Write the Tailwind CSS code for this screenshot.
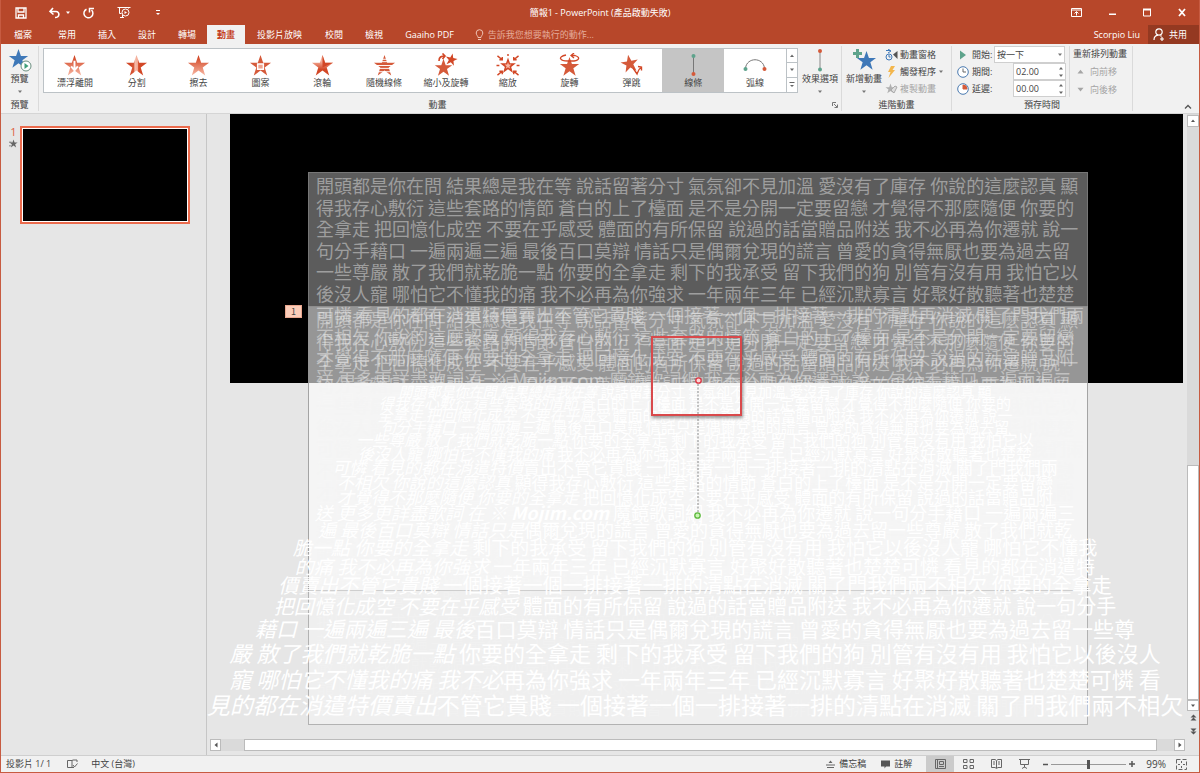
<!DOCTYPE html>
<html lang="zh-Hant">
<head>
  <meta charset="UTF-8" />
  <title>簡報1 - PowerPoint</title>
  <script src="https://cdn.jsdelivr.net/npm/@tailwindcss/browser@4"></script>
</head>
<body class="h-screen flex flex-col overflow-hidden bg-[#e6e6e6] border-x border-b border-[#c75b41] font-['Open_Sans','Noto_Sans_CJK_TC',sans-serif] text-[9px] leading-[12px] text-[#444]">

  <!-- Shared shapes -->
  <svg class="absolute w-0 h-0">
    <defs>
      <linearGradient id="fadeDown" x1="0" y1="0" x2="0" y2="1"><stop offset="0.1" stop-color="#d24726" /><stop offset="1" stop-color="#f8b8a4" /></linearGradient>
      <linearGradient id="fadeSplit"><stop offset="0.2" stop-color="#d24726" /><stop offset="0.38" stop-color="#d9593b" /><stop offset="0.42" stop-color="#f6c0b0" /><stop offset="0.56" stop-color="#f3a791" /><stop offset="0.6" stop-color="#d24726" /></linearGradient>
      <linearGradient id="fadeWheel" x1="0" y1="0" x2="0" y2="1"><stop offset="0.3" stop-color="#f5b09c" /><stop offset="0.7" stop-color="#d24726" /></linearGradient>
    </defs>
    <symbol id="star" viewBox="0 0 24 24"><path d="M12 1l2.800 8H23l-6.600 5 2.600 8.500-7-5.200-7 5.200L7.600 14 1 9h8.200z" /></symbol>
    <symbol id="down" viewBox="0 0 6 4"><path d="M1 0.500h4L3 3z" /></symbol>
    <symbol id="up" viewBox="0 0 6 4"><path d="M1 3h4L3 0.500z" /></symbol>
  </svg>

  <!-- Title bar and tabs -->
  <header class="shrink-0 bg-[#b7472a] text-white">
    <div class="relative h-[25px] flex items-center justify-between pl-[13px] pr-[12px]">
      <div class="flex items-center">
        <button aria-label="儲存檔案"><svg class="w-[14px] h-[12px]" viewBox="0 0 14 12" fill="none" stroke="#fff" stroke-width="1.300"><path d="M2 1h10v10H2zM4 1v4h6V1M4.500 11V8h5v3" /></svg></button>
        <button aria-label="復原" class="ml-[20px]"><svg class="w-[13px] h-[12px]" viewBox="0 0 13 12" fill="none" stroke="#fff" stroke-width="1.600"><path d="M5 1L2 4.500l3.500 3M2 4.500h6c4 0 4 6-1 6" /></svg></button>
        <button aria-label="復原選單" class="ml-[4px]"><svg class="w-[6px] h-[4px] fill-white"><use href="#down" /></svg></button>
        <button aria-label="重複" class="ml-[11px]"><svg class="w-[13px] h-[12px]" viewBox="0 0 13 12" fill="none" stroke="#fff" stroke-width="1.500"><path d="M4.500 2.200a4.500 4.500 0 1 0 5 0.800M7.500 5.500V1.500H12" /></svg></button>
        <button aria-label="從首張投影片" class="ml-[22px]"><svg class="w-[14px] h-[13px]" viewBox="0 0 14 13" fill="none" stroke="#fff"><path d="M0.500 1.500h13M2.500 1.500v6h2M11.500 1.500v1M3 11.500h4M5.500 9v2" /><circle cx="8.500" cy="6.500" r="3.500" /><path d="M7.500 5v3l2.500-1.500z" fill="#fff" stroke="none" /></svg></button>
        <button aria-label="自訂快速存取工具列" class="ml-[24px]"><svg class="w-[6px] h-[6px]" viewBox="0 0 6 6" fill="#fff"><path d="M1 0h4v1H1zM1 3h4L3 5z" /></svg></button>
      </div>
      <h1 class="absolute left-1/2 -translate-x-1/2 whitespace-nowrap">簡報1 - PowerPoint (產品啟動失敗)</h1>
      <div class="flex items-center gap-[25px]">
        <button aria-label="功能區顯示選項"><svg class="w-[11px] h-[9px]" viewBox="0 0 11 9" fill="none" stroke="#fff"><path d="M0.500 0.500h10v8h-10zM0.500 2h10M5.500 7.500V4M3.500 5.500l2-2 2 2" /></svg></button>
        <button aria-label="最小化"><svg class="w-[10px] h-[9px]" viewBox="0 0 10 9" fill="#fff"><path d="M2 5.500h7V7H2z" /></svg></button>
        <button aria-label="最大化"><svg class="w-[10px] h-[9px]" viewBox="0 0 10 9" fill="none" stroke="#fff"><path d="M1.500 1v7h7V1" /><path d="M1 1.500h8" stroke-width="2" /></svg></button>
        <button aria-label="關閉"><svg class="w-[10px] h-[9px]" viewBox="0 0 10 9" stroke="#fff" stroke-width="1.800"><path d="M2 1l6 7M8 1L2 8" /></svg></button>
      </div>
    </div>
    <nav class="h-[19px] flex items-stretch">
      <button class="w-[46px] pr-[2px]">檔案</button>
      <button class="px-[11px]">常用</button>
      <button class="px-[11px]">插入</button>
      <button class="px-[11px]">設計</button>
      <button class="px-[11px]">轉場</button>
      <button class="px-[10px] bg-[#f1f1f1] text-[#c43e1c] font-bold">動畫</button>
      <button class="px-[12px]">投影片放映</button>
      <button class="px-[11px]">校閱</button>
      <button class="px-[11px]">檢視</button>
      <button class="px-[11px]">Gaaiho PDF</button>
      <label class="flex items-center gap-[4px] pl-[10px]">
        <svg class="w-[9px] h-[12px]" viewBox="0 0 9 12" fill="none" stroke="#f0c4b6"><path d="M3 8.500C3 7 1.200 6 1.200 4a3.300 3.300 0 0 1 6.600 0C7.800 6 6 7 6 8.500zM3 10.500h3" /></svg>
        <input type="text" aria-label="操作說明搜尋" placeholder="告訴我您想要執行的動作..." class="w-[150px] placeholder:text-[#e5ab9b] outline-none" />
      </label>
      <span class="ml-auto mr-[8px] self-center text-[9px]">Scorpio Liu</span>
      <button class="w-[51px] bg-[#943921] flex items-center gap-[4px] pl-[5px]">
        <svg class="w-[12px] h-[13px]" viewBox="0 0 12 13" fill="none" stroke="#fff" stroke-width="1.200"><circle cx="6" cy="4" r="3.200" /><path d="M1 12c0-3 2-4.500 4-4.800M7.500 7.500l1 1M9 9v4M7 11h4" /></svg>共用
      </button>
    </nav>
  </header>

  <!-- Ribbon -->
  <section class="shrink-0 h-[70px] bg-[#f1f1f1] border-b border-[#d5d5d5] flex pt-[2px] pb-[2px]">
    <div class="w-[38px] border-r border-[#dadada] flex flex-col items-center justify-between">
      <button class="flex flex-col items-center pt-[2px]">
        <svg class="w-[24px] h-[24px]" viewBox="0 0 24 24"><use href="#star" width="21" height="21" fill="#3e78b8" /><circle cx="18" cy="18" r="5" fill="#fff" stroke="#6b8f80" /><path d="M16.500 15v6l4-3z" fill="#3f9e78" /></svg>
        <span class="pt-[1px]">預覽</span>
        <svg class="mt-[5px] w-[6px] h-[4px] fill-[#777]"><use href="#down" /></svg>
      </button>
      <span>預覽</span>
    </div>

    <div class="flex-1 flex flex-col justify-between pl-[4px] pr-[3px] border-r border-[#dadada]">
      <div class="flex gap-[4px] pt-[2px]">
        <div class="flex-1 h-[45px] flex border border-[#bcc2c6] bg-white">
          <div class="flex-1 grid grid-cols-12">
            <button class="flex flex-col items-center justify-end pb-[3px]">
              <svg class="w-[23px] h-[23px]" viewBox="0 0 24 24"><use href="#star" fill="url(#fadeDown)" /><path d="M12 7v9M8.500 13l3.500 4 3.500-4" stroke="#fff" stroke-width="2" fill="none" /></svg>漂浮離開
            </button>
            <button class="flex flex-col items-center justify-end pb-[3px]">
              <svg class="w-[23px] h-[23px]" viewBox="0 0 24 24"><use href="#star" fill="url(#fadeSplit)" /></svg>分割
            </button>
            <button class="flex flex-col items-center justify-end pb-[3px]">
              <svg class="w-[23px] h-[23px]" viewBox="0 0 24 24"><use href="#star" fill="url(#fadeDown)" /></svg>擦去
            </button>
            <button class="flex flex-col items-center justify-end pb-[3px]">
              <svg class="w-[23px] h-[23px]" viewBox="0 0 24 24"><use href="#star" fill="#d55a3a" /><path d="M9 10.500h6v5.500h-6z" fill="#f0a48f" stroke="#fff" stroke-width="1.500" /></svg>圖案
            </button>
            <button class="flex flex-col items-center justify-end pb-[3px]">
              <svg class="w-[23px] h-[23px]" viewBox="0 0 24 24"><use href="#star" fill="url(#fadeWheel)" /><path d="M12 1l2.800 8H23l-11 5z" fill="#d24726" /></svg>滾輪
            </button>
            <button class="flex flex-col items-center justify-end pb-[3px] whitespace-nowrap">
              <svg class="w-[23px] h-[23px]" viewBox="0 0 24 24"><use href="#star" fill="#d55a3a" /><path d="M3 5.500h18M3 8h18M3 12h18M3 15h18M3 18.500h18" stroke="#fff" stroke-width="1" /></svg>隨機線條
            </button>
            <button class="flex flex-col items-center justify-end pb-[3px] whitespace-nowrap">
              <svg class="w-[25px] h-[24px]" viewBox="0 0 25 24"><use href="#star" x="1" y="5" width="19" height="19" fill="#d55a3a" /><use href="#star" x="12" y="0" width="13" height="13" fill="#d24726" transform="rotate(12 19 6)" /><path d="M6 8c0-4 2-5 6-5M9.500 0.500L12 3 9.500 6" stroke="#d24726" stroke-width="1.600" fill="none" /></svg>縮小及旋轉
            </button>
            <button class="flex flex-col items-center justify-end pb-[3px]">
              <svg class="w-[24px] h-[23px]" viewBox="0 0 24 24"><use href="#star" x="3" y="3" width="18" height="18" fill="#d24726" /><use href="#star" x="8" y="8" width="8" height="8" fill="#f8b8a4" /><path d="M1 2l5 4M6 3v3H3M23 2l-5 4M18 3v3h3M1 22l5-4M3 18h3v3M23 22l-5-4M21 18h-3v3M0 12h3M21 12h3M12 0v2" stroke="#d24726" stroke-width="1.500" fill="none" /></svg>縮放
            </button>
            <button class="flex flex-col items-center justify-end pb-[3px]">
              <svg class="w-[22px] h-[24px]" viewBox="0 0 22 24"><use href="#star" x="0" y="3" width="21" height="21" fill="#d55a3a" /><path d="M7 2C-2 4 1 8 9 8h6c6-1 6-4 1-5.500h-3M15 0l-3 2.500 3 2.500" stroke="#d24726" stroke-width="1.300" fill="none" /></svg>旋轉
            </button>
            <button class="flex flex-col items-center justify-end pb-[3px]">
              <svg class="w-[24px] h-[24px]" viewBox="0 0 24 24"><use href="#star" x="1" y="1" width="19" height="19" fill="#d55a3a" transform="rotate(-10 10 10)" /><path d="M14 15l4 6c1-3 1.500-5 4.500-7M19 13.500l3.500 0.500 0 3.500" stroke="#d24726" stroke-width="1.400" fill="none" /></svg>彈跳
            </button>
            <button class="flex flex-col items-center justify-end pb-[3px] bg-[#c5c5c5]">
              <svg class="w-[21px] h-[24px]" viewBox="0 0 21 24"><path d="M10.500 3v18" stroke="#777" /><circle cx="10.500" cy="3" r="2" fill="#5ea38c" /><circle cx="10.500" cy="21" r="2" fill="#d55a3a" /></svg>線條
            </button>
            <button class="flex flex-col items-center justify-end pb-[3px]">
              <svg class="w-[24px] h-[23px]" viewBox="0 0 24 23"><path d="M2.500 14C4 3 20 3 21.500 14" stroke="#777" fill="none" /><circle cx="2.500" cy="15" r="2" fill="#5ea38c" /><circle cx="21.500" cy="15" r="2" fill="#d55a3a" /></svg>弧線
            </button>
          </div>
          <div class="w-[11px] border-l border-[#bcc2c6] grid grid-rows-3 divide-y divide-[#bcc2c6]">
            <button aria-label="上一列" class="grid place-items-center"><svg class="w-[6px] h-[4px] fill-[#666]"><use href="#up" /></svg></button>
            <button aria-label="下一列" class="grid place-items-center"><svg class="w-[6px] h-[4px] fill-[#666]"><use href="#down" /></svg></button>
            <button aria-label="其他" class="grid place-items-center"><svg class="w-[6px] h-[6px]" viewBox="0 0 6 6" fill="#666"><path d="M0.500 0h5v1h-5zM1 3h4L3 5z" /></svg></button>
          </div>
        </div>
        <button class="w-[36px] -mt-[2px] flex flex-col items-center whitespace-nowrap">
          <svg class="w-[8px] h-[26px]" viewBox="0 0 8 26"><path d="M4 5v18" stroke="#888" /><circle cx="4" cy="5" r="2" fill="#d55a3a" /><circle cx="4" cy="23.500" r="2" fill="#5ea38c" /></svg>
          <span class="pt-[1px]">效果選項</span>
          <svg class="mt-[5px] w-[6px] h-[4px] fill-[#777]"><use href="#down" /></svg>
        </button>
      </div>
      <div class="flex items-center">
        <span class="flex-1 text-center">動畫</span>
        <button aria-label="動畫選項"><svg class="w-[6px] h-[6px]" viewBox="0 0 6 6" fill="none" stroke="#777"><path d="M0.500 4V0.500H4M2 2l3 3M5.500 2.500v3h-3" /></svg></button>
      </div>
    </div>

    <div class="w-[110px] border-r border-[#dadada] flex flex-col justify-between">
      <div class="flex gap-[3px] pl-[4px]">
        <button class="flex flex-col items-center pt-[2px] whitespace-nowrap">
          <svg class="w-[24px] h-[24px]" viewBox="0 0 24 24"><use href="#star" x="4" y="2" width="21" height="21" fill="#3e78b8" /><path d="M1 5.500h9M5.500 1v9" stroke="#5ea38c" stroke-width="3" /></svg>
          <span class="pt-[1px]">新增動畫</span>
          <svg class="mt-[5px] w-[6px] h-[4px] fill-[#777]"><use href="#down" /></svg>
        </button>
        <div class="flex flex-col gap-[5px] pt-[3px] whitespace-nowrap">
          <button class="flex items-center gap-[2px]"><svg class="w-[13px] h-[12px]" viewBox="0 0 13 12" fill="none" stroke="#3e78b8"><circle cx="4" cy="8" r="3" /><path d="M1 1.500h4M3 0l3 2-3 2M4 6v2h1.500" /><path d="M8 5.500L12.500 2v8z" fill="#555" stroke="none" /></svg>動畫窗格</button>
          <button class="flex items-center gap-[2px]"><svg class="w-[13px] h-[12px]" viewBox="0 0 13 12" fill="#f3b64c"><path d="M6 0h4L7.500 4H10L3.500 12l2-6H3z" /></svg>觸發程序<svg class="w-[6px] h-[4px] fill-[#777]"><use href="#down" /></svg></button>
          <button class="flex items-center gap-[2px] text-[#a5a5a5]" disabled><svg class="w-[13px] h-[12px]" viewBox="0 0 13 12" fill="#b0b0b0"><use href="#star" width="11" height="11" /><path d="M6 7l4-4 2 1-3 6z" stroke="#aaa" fill="#ddd" /></svg>複製動畫</button>
        </div>
      </div>
      <span class="text-center">進階動畫</span>
    </div>

    <div class="w-[181px] mr-[66px] border-r border-[#dadada] flex flex-col justify-between">
      <div class="flex">
        <div class="w-[118px] pl-[5px] border-r border-[#dadada] flex flex-col">
          <div class="flex items-center h-[17px]">
            <svg class="w-[12px] h-[12px] mr-[3px]" viewBox="0 0 12 12" fill="#5ea38c"><path d="M3 1.500v9L9 6z" /></svg>
            <label for="start">開始:</label>
            <select id="start" class="ml-auto mr-[4px] w-[71px] h-[17px] border border-[#cfcfcf] bg-white pl-[2px] text-[9px] appearance-none"><option>按一下</option></select>
            <svg class="-ml-[12px] mr-[6px] w-[6px] h-[4px] fill-[#777]"><use href="#down" /></svg>
          </div>
          <div class="flex items-center h-[17px]">
            <svg class="w-[12px] h-[12px] mr-[3px]" viewBox="0 0 12 12" fill="#fff" stroke="#4a7ab0"><circle cx="6" cy="6" r="5.300" /><path d="M6 2.500V6h3" stroke="#666" fill="none" /></svg>
            <label for="duration">期間:</label>
            <input id="duration" type="text" value="02.00" class="ml-auto mr-[4px] w-[53px] h-[17px] border border-[#cfcfcf] bg-white pl-[2px] text-[9px]" />
            <svg class="-ml-[12px] mr-[5px] w-[6px] h-[12px]" viewBox="0 0 6 12" fill="#666"><path d="M1 3.500h4L3 1zM1 8.500h4L3 11z" /></svg>
          </div>
          <div class="flex items-center h-[17px]">
            <svg class="w-[12px] h-[12px] mr-[3px]" viewBox="0 0 12 12" fill="#fff" stroke="#4a7ab0"><circle cx="6" cy="6" r="5.300" /><path d="M6 6V2a4 4 0 0 1 4 4z" fill="#d55a3a" stroke="#d55a3a" /></svg>
            <label for="delay">延遲:</label>
            <input id="delay" type="text" value="00.00" class="ml-auto mr-[4px] w-[53px] h-[17px] border border-[#cfcfcf] bg-white pl-[2px] text-[9px]" />
            <svg class="-ml-[12px] mr-[5px] w-[6px] h-[12px]" viewBox="0 0 6 12" fill="#666"><path d="M1 3.500h4L3 1zM1 8.500h4L3 11z" /></svg>
          </div>
        </div>
        <div class="flex flex-col gap-[6px] pl-[3px] pt-[2px] whitespace-nowrap">
          <span>重新排列動畫</span>
          <button class="flex items-center gap-[5px] pl-[3px] text-[#a5a5a5]" disabled><svg class="w-[9px] h-[6px] fill-[#a5a5a5]"><use href="#up" /></svg>向前移</button>
          <button class="flex items-center gap-[5px] pl-[3px] text-[#a5a5a5]" disabled><svg class="w-[9px] h-[6px] fill-[#a5a5a5]"><use href="#down" /></svg>向後移</button>
        </div>
      </div>
      <span class="text-center">預存時間</span>
    </div>
    <button aria-label="摺疊功能區" class="absolute right-[8px] top-[103px]"><svg class="w-[8px] h-[8px]" viewBox="0 0 8 8" fill="none" stroke="#555" stroke-width="1.300"><path d="M1 5.500l3-3 3 3" /></svg></button>
  </section>

  <!-- Workspace -->
  <main class="flex-1 min-h-0 flex">
    <aside class="w-[206px] shrink-0 border-r border-[#c6c6c6] flex items-start pt-[12px] pl-[6px]">
      <div class="w-[13px] flex flex-col items-center text-[11px] text-[#e0603f]">1
        <svg class="w-[9px] h-[9px] mt-[1px]" viewBox="0 0 24 24" fill="#666"><use href="#star" /><path d="M0 7h7v2H0zM0 17h5v2H0z" /></svg>
      </div>
      <button aria-label="投影片 1" class="w-[170px] h-[98px] border-2 border-[#eb6b4d] bg-white p-px"><span class="block h-full bg-black"></span></button>
    </aside>

    <div class="flex-1 min-w-0 flex flex-col">
      <!-- Slide canvas with objects that run past the slide -->
      <div class="relative flex-1 overflow-hidden font-['Noto_Sans_CJK_TC',sans-serif]">
        <div class="absolute left-[23px] right-[4px] top-0 h-[269px] bg-black"></div>

        <!-- Two overlapping text boxes -->
        <div id="lyrics" class="absolute left-[101px] w-[780px] top-[58px] h-[419px] border border-[#888]/60 bg-white/36 px-[7px] pt-[2px] pb-[6px] flex flex-col justify-between text-[18px] leading-[21px] text-[#f4f4f4]/44 whitespace-nowrap">
          <p>開頭都是你在問 結果總是我在等 說話留著分寸 氣氛卻不見加溫 愛沒有了庫存 你說的這麼認真 顯</p>
          <p>得我存心敷衍 這些套路的情節 蒼白的上了檯面 是不是分開一定要留戀 才覺得不那麼隨便 你要的</p>
          <p>全拿走 把回憶化成空 不要在乎感受 體面的有所保留 說過的話當贈品附送 我不必再為你遷就 說一</p>
          <p>句分手藉口 一遍兩遍三遍 最後百口莫辯 情話只是偶爾兌現的謊言 曾愛的貪得無厭也要為過去留</p>
          <p>一些尊嚴 散了我們就乾脆一點 你要的全拿走 剩下的我承受 留下我們的狗 別管有沒有用 我怕它以</p>
          <p>後沒人寵 哪怕它不懂我的痛 我不必再為你強求 一年兩年三年 已經沉默寡言 好聚好散聽著也楚楚</p>
          <p>可憐 看見的都在消遣特價賣出不管它貴賤 一個接著一個一排接著一排的清點再消滅 關了門我們兩</p>
          <p>不相欠 你說的這麼認真 顯得我存心敷衍 這些套路的情節 蒼白的上了檯面 是不是分開一定要留戀</p>
          <p>才覺得不那麼隨便 你要的全拿走 把回憶化成空 不要在乎感受 體面的有所保留 說過的話當贈品附</p>
          <p>送 更多更詳盡歌詞 在 ※ Mojim.com 魔鏡歌詞網 我不必再為你遷就 說一句分手藉口 一遍兩遍三</p>
          <p>遍 最後百口莫辯 情話只是偶爾兌現的謊言 曾愛的貪得無厭也要為過去留一些尊嚴 散了我們就乾</p>
          <p>脆一點 你要的全拿走 剩下的我承受 留下我們的狗 別管有沒有用 我怕它以後沒人寵 哪怕它不懂我</p>
          <p>的痛 我不必再為你強求 一年兩年三年 已經沉默寡言 好聚好散聽著也楚楚可憐 看見的都在消遣特</p>
          <p>價賣出不管它貴賤 一個接著一個一排接著一排的清點在消滅 關了門我們兩不相欠 你要的全拿走</p>
          <p>把回憶化成空 不要在乎感受 體面的有所保留 說過的話當贈品附送 我不必再為你遷就 說一句分手</p>
          <p>藉口 一遍兩遍三遍 最後百口莫辯 情話只是偶爾兌現的謊言 曾愛的貪得無厭也要為過去留一些尊</p>
          <p>嚴 散了我們就乾脆一點 你要的全拿走 剩下的我承受 留下我們的狗 別管有沒有用 我怕它以後沒人</p>
          <p>寵 哪怕它不懂我的痛 我不必再為你強求 一年兩年三年 已經沉默寡言 好聚好散聽著也楚楚可憐 看</p>
          <p>見的都在消遣特價賣出不管它貴賤 一個接著一個一排接著一排的清點在消滅 關了門我們兩不相欠</p>
        </div>
        <div id="lyricsCopy" class="absolute left-[101px] w-[780px] top-[192px] h-[419px] border border-[#888]/60 bg-white/36 px-[7px] pt-[2px] pb-[6px] flex flex-col justify-between text-[18px] leading-[21px] text-[#f4f4f4]/44 whitespace-nowrap"></div>

        <!-- Perspective lyric crawl -->
        <div class="absolute left-0 right-0 top-[271px] flex flex-col items-center text-white whitespace-nowrap pr-[4px]">
          <p class="text-[14px] leading-[12px]"><i>開頭都是你在問 結果總是我在等</i> 說話留著分寸 氣氛卻不見加溫 愛沒有了庫存 你說的這麼認真 顯</p>
          <p class="text-[15px] leading-[12px]"><i>得我存心敷衍 這些套路的情節</i> 蒼白的上了檯面 是不是分開一定要留戀 才覺得不那麼隨便 你要的</p>
          <p class="text-[15px] leading-[12px]"><i>全拿走 把回憶化成空 不要在乎感受</i> 體面的有所保留 說過的話當贈品附送 我不必再為你遷就 說一</p>
          <p class="text-[15px] leading-[12px]"><i>句分手藉口 一遍兩遍三遍</i> 最後百口莫辯 情話只是偶爾兌現的謊言 曾愛的貪得無厭也要為過去留</p>
          <p class="text-[16px] leading-[13px]"><i>一些尊嚴 散了我們就乾脆一點</i> 你要的全拿走 剩下的我承受 留下我們的狗 別管有沒有用 我怕它以</p>
          <p class="text-[16px] leading-[14px]"><i>後沒人寵 哪怕它不懂我的痛</i> 我不必再為你強求 一年兩年三年 已經沉默寡言 好聚好散聽著也楚楚</p>
          <p class="text-[17px] leading-[14px]"><i>可憐 看見的都在消遣特價</i>賣出不管它貴賤 一個接著一個一排接著一排的清點在消滅 關了門我們兩</p>
          <p class="text-[17px] leading-[15px]"><i>不相欠 你說的這麼認真</i> 顯得我存心敷衍 這些套路的情節 蒼白的上了檯面 是不是分開一定要留戀</p>
          <p class="text-[17px] leading-[15px]"><i>才覺得不那麼隨便 你要的全拿走</i> 把回憶化成空 不要在乎感受 體面的有所保留 說過的話當贈品附</p>
          <p class="text-[18px] leading-[16px]"><i>送 更多更詳盡歌詞 在 ※ <b>Mojim.com</b></i> 魔鏡歌詞網 我不必再為你遷就 說一句分手藉口 一遍兩遍三</p>
          <p class="text-[18px] leading-[18px]"><i>遍 最後百口莫辯 情話只是</i>偶爾兌現的謊言 曾愛的貪得無厭也要為過去留一些尊嚴 散了我們就乾</p>
          <p class="text-[19px] leading-[18px]"><i>脆一點 你要的全拿走</i> 剩下的我承受 留下我們的狗 別管有沒有用 我怕它以後沒人寵 哪怕它不懂我</p>
          <p class="text-[19px] leading-[19px]"><i>的痛 我不必再為你強求</i> 一年兩年三年 已經沉默寡言 好聚好散聽著也楚楚可憐 看見的都在消遣特</p>
          <p class="text-[20px] leading-[20px]"><i>價賣出不管它貴賤</i> 一個接著一個一排接著一排的清點在消滅 關了門我們兩不相欠 你要的全拿走</p>
          <p class="text-[20px] leading-[22px]"><i>把回憶化成空 不要在乎感受</i> 體面的有所保留 說過的話當贈品附送 我不必再為你遷就 說一句分手</p>
          <p class="text-[21px] leading-[23px]"><i>藉口 一遍兩遍三遍 最後</i>百口莫辯 情話只是偶爾兌現的謊言 曾愛的貪得無厭也要為過去留一些尊</p>
          <p class="text-[22px] leading-[25px]"><i>嚴 散了我們就乾脆一點</i> 你要的全拿走 剩下的我承受 留下我們的狗 別管有沒有用 我怕它以後沒人</p>
          <p class="text-[22px] leading-[26px]"><i>寵 哪怕它不懂我的痛 我不必</i>再為你強求 一年兩年三年 已經沉默寡言 好聚好散聽著也楚楚可憐 看</p>
          <p class="text-[23px] leading-[26px]"><i>見的都在消遣特價賣出</i>不管它貴賤 一個接著一個一排接著一排的清點在消滅 關了門我們兩不相欠</p>
        </div>

        <!-- Animation order tag, highlight and motion path -->
        <span class="absolute left-[78px] top-[191px] w-[17px] h-[13px] bg-[#fbcdb9] border border-[#e9a68e] text-center leading-[11px]">1</span>
        <div class="absolute left-[444px] top-[222px] w-[91px] h-[80px] border-2 border-[#d9494b] shadow-[1px_2px_3px_rgba(0,0,0,0.4)]"></div>
        <svg class="absolute left-[486px] top-[262px] w-[10px] h-[144px]" viewBox="0 0 10 144" fill="none"><path d="M5 8v128" stroke="#888" stroke-dasharray="2 1.500" /><circle cx="5.500" cy="4.500" r="2.700" fill="#fbd5d5" stroke="#dd3340" stroke-width="1.300" /><circle cx="4.500" cy="139.500" r="2.700" fill="#c9f5b4" stroke="#5cb83c" stroke-width="1.300" /></svg>
      </div>

      <!-- Horizontal scroll bar -->
      <div class="h-[12px] mt-[4px] mb-[4px] ml-[3px] mr-[2px] flex bg-[#dadada] shrink-0">
        <button aria-label="向左捲動" class="w-[11px] border border-[#bbb] bg-white grid place-items-center"><svg class="w-[4px] h-[6px]" viewBox="0 0 4 6" fill="#555"><path d="M3.500 0.500v5L0.500 3z" /></svg></button>
        <div class="flex-1 ml-[23px] mr-[17px] border border-[#bbb] bg-white"></div>
        <button aria-label="向右捲動" class="w-[11px] border border-[#bbb] bg-white grid place-items-center"><svg class="w-[4px] h-[6px]" viewBox="0 0 4 6" fill="#555"><path d="M0.500 0.500v5L3.500 3z" /></svg></button>
      </div>
    </div>

    <!-- Vertical scroll bar -->
    <div class="w-[12px] shrink-0 flex flex-col bg-[#dadada] pt-px">
      <button aria-label="向上捲動" class="h-[12px] border border-[#bbb] bg-white grid place-items-center"><svg class="w-[6px] h-[4px] fill-[#555]"><use href="#up" /></svg></button>
      <div class="flex-1"></div>
      <div class="h-[235px] border border-[#bbb] bg-white"></div>
      <button aria-label="向下捲動" class="h-[11px] border border-[#bbb] bg-white grid place-items-center"><svg class="w-[6px] h-[4px] fill-[#555]"><use href="#down" /></svg></button>
      <div class="h-[44px] bg-[#e6e6e6] flex flex-col items-center gap-[5px] pt-[3px]">
        <button aria-label="上一張投影片"><svg class="w-[7px] h-[8px]" viewBox="0 0 7 8" fill="#555"><path d="M0.500 3.500h6l-3-3zM0.500 6.500h6l-3-3z" /></svg></button>
        <button aria-label="下一張投影片"><svg class="w-[7px] h-[8px]" viewBox="0 0 7 8" fill="#555"><path d="M0.500 1.500h6l-3 3zM0.500 4.500h6l-3 3z" /></svg></button>
      </div>
    </div>
  </main>

  <!-- Status bar -->
  <footer class="shrink-0 h-[17px] border-t border-[#cfcfcf] bg-[#f1f1f1] flex items-center pl-[5px] pr-[12px] whitespace-nowrap">
    <span>投影片 1/ 1</span>
    <button aria-label="拼字檢查" class="ml-[16px]"><svg class="w-[11px] h-[10px]" viewBox="0 0 11 10" fill="none" stroke="#666"><path d="M5 1.500v7M5 8.500H0.500v-7H5L6 1h4v2M5 8.500h2M6 6l1.500 2L10.500 4.500" /></svg></button>
    <button class="ml-[13px]">中文 (台灣)</button>
    <div class="ml-auto flex items-center self-stretch">
      <button class="flex items-center gap-[4px]"><svg class="w-[9px] h-[9px]" viewBox="0 0 9 9" fill="#666"><path d="M2.500 3h4l-2-2.500zM0 4.500h9v1H0zM1 7h7v1H1z" /></svg>備忘稿</button>
      <button class="ml-[15px] flex items-center gap-[4px]"><svg class="w-[9px] h-[9px]" viewBox="0 0 9 9" fill="#555"><path d="M0 0.500h9v6H5L3.500 8.500V6.500H0z" /></svg>註解</button>
      <button aria-label="標準模式" class="ml-[14px] w-[28px] self-stretch bg-[#cbcbcb] grid place-items-center"><svg class="w-[11px] h-[10px]" viewBox="0 0 11 10" fill="none" stroke="#666"><path d="M0.500 0.500h10v9h-10zM2.500 0.500v9M4.500 2.500h4v3h-4zM4 7.500h5" /></svg></button>
      <button aria-label="投影片瀏覽" class="w-[28px] grid place-items-center"><svg class="w-[11px] h-[10px]" viewBox="0 0 11 10" fill="none" stroke="#666"><path d="M0.500 0.500h3.500v3H0.500zM7 0.500h3.500v3H7zM0.500 6.500h3.500v3H0.500zM7 6.500h3.500v3H7z" /></svg></button>
      <button aria-label="閱讀檢視" class="w-[28px] grid place-items-center"><svg class="w-[11px] h-[10px]" viewBox="0 0 11 10" fill="none" stroke="#666"><path d="M5.500 2v7M5.500 1.500L4 0.500H0.500v8H4l1.500 1 1.500-1h3.500v-8H7zM2 3h2M2 5h2M7 3h2M7 5h2" /></svg></button>
      <button aria-label="投影片放映" class="w-[28px] grid place-items-center"><svg class="w-[11px] h-[10px]" viewBox="0 0 11 10" fill="none" stroke="#666"><path d="M0 0.500h11M1.500 0.500v5h8v-5M5.500 5.500v3M3 9.500l2.500-1.500L8 9.500" /></svg></button>
      <button aria-label="縮小" class="ml-[5px]"><svg class="w-[5px] h-[5px]" viewBox="0 0 5 5"><path d="M0 2.500h5" stroke="#555" stroke-width="1.500" /></svg></button>
      <input type="range" aria-label="縮放" min="0" max="100" value="50" class="mx-[3px] w-[75px] h-[9px] appearance-none bg-[linear-gradient(#999,#999)] bg-[length:100%_1px] bg-center bg-no-repeat [&::-webkit-slider-thumb]:appearance-none [&::-webkit-slider-thumb]:w-[3px] [&::-webkit-slider-thumb]:h-[9px] [&::-webkit-slider-thumb]:bg-[#555]" />
      <button aria-label="放大"><svg class="w-[6px] h-[6px]" viewBox="0 0 6 6"><path d="M0 3h6M3 0v6" stroke="#555" stroke-width="1.500" /></svg></button>
      <span class="ml-[11px] text-[10px]">99%</span>
      <button aria-label="配合視窗大小" class="ml-[10px]"><svg class="w-[11px] h-[11px]" viewBox="0 0 11 11" fill="none" stroke="#666"><path d="M0.500 0.500h10v10h-10z" stroke-dasharray="4 2" /><path d="M5.500 2v2M5.500 7v2M2 5.500h2M7 5.500h2" /></svg></button>
    </div>
  </footer>

  <script>
    // both boxes hold the same lyrics
    document.getElementById('lyricsCopy').innerHTML = document.getElementById('lyrics').innerHTML;
  </script>
</body>
</html>
